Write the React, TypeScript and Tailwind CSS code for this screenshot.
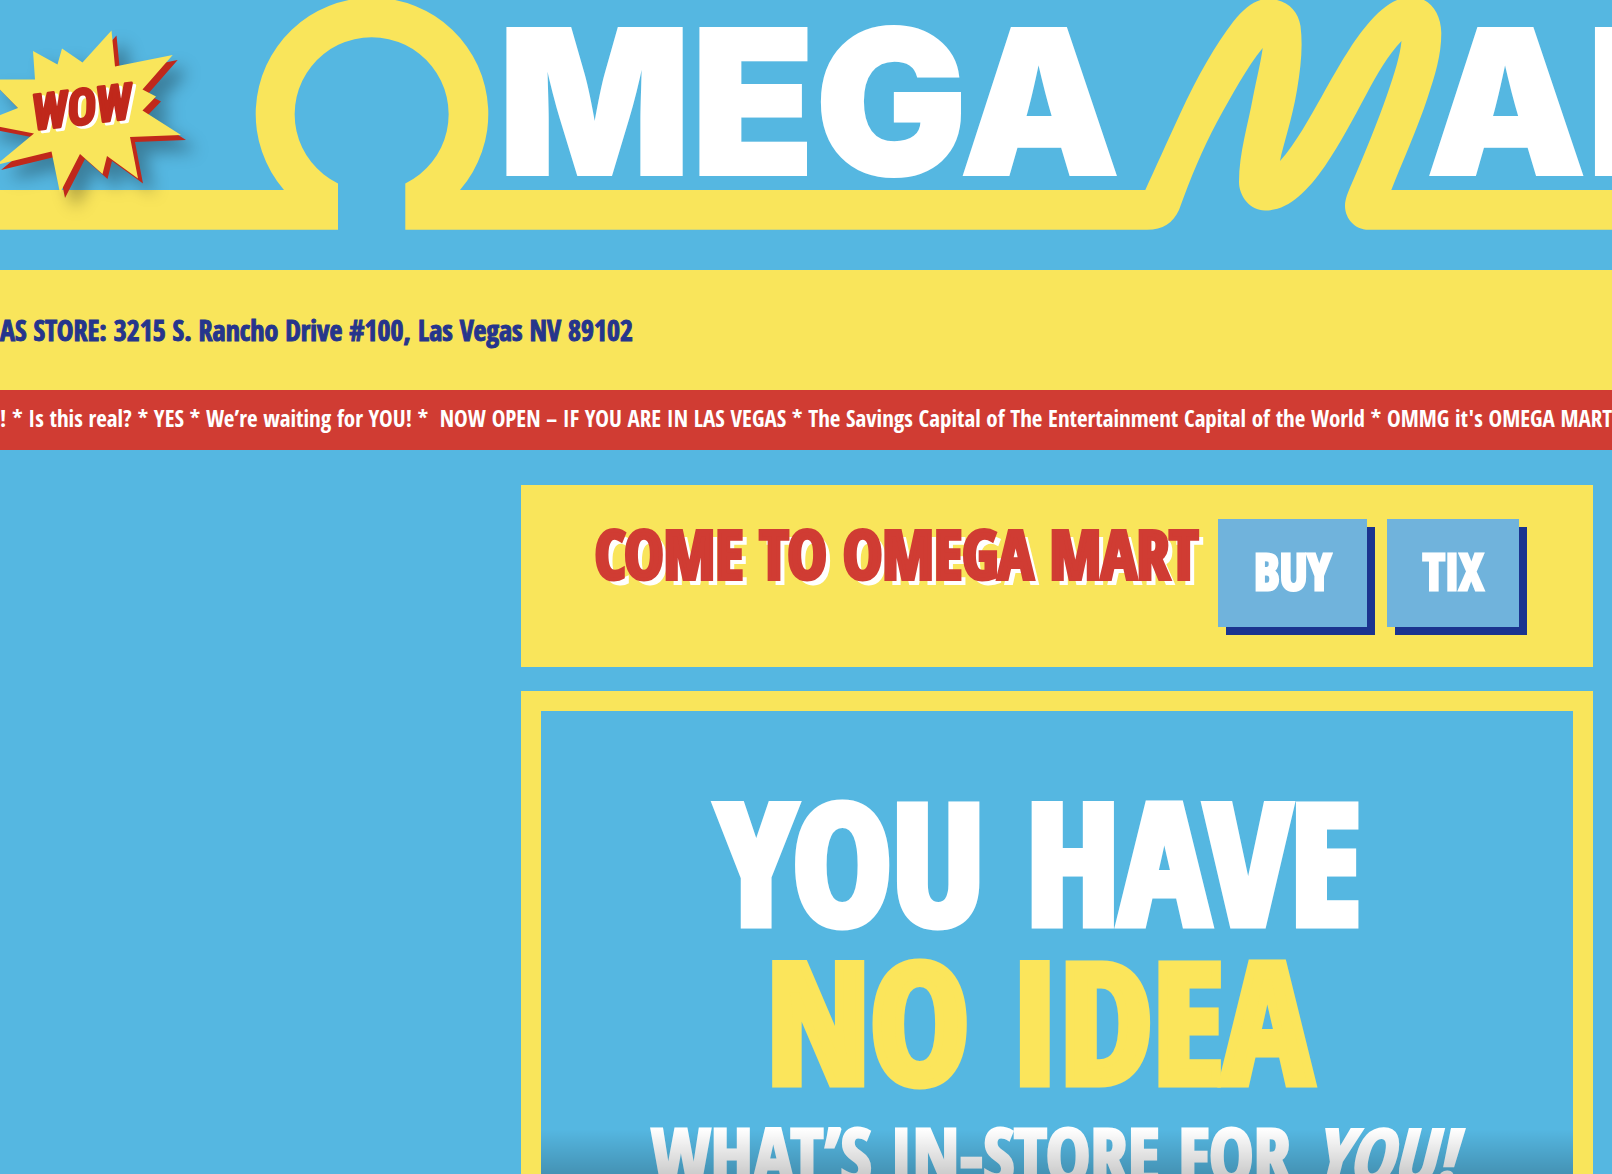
import type { ReactNode } from "react";

const BURST =
  "-10,79.5 35,79.5 33,51 57.5,64.5 62,48.5 82.5,62.5 111.5,30.5 115,66.5 172.7,55 142.5,89.5 156,96.5 142.5,110.5 181,135 130,137 138,178.5 107,156 102.5,174 80,154 60,193 51.5,151.5 -4,165 34,133.5 -20,123 18,108";

function Logo() {
  return (
    <svg viewBox="0 0 1612 230" className="block h-auto w-full" role="img" aria-label="Omega Mart">
      <g fill="#f9e55b">
        <path d="M0 190H284A116.3 116.3 0 1 1 460 190H1145.3C1155 169 1167 142 1180 114C1198 75 1216 44 1233 22C1246 6 1256 -1 1268 -1C1286 -1 1298 10 1300.5 26C1303 46 1301 66 1297 90C1292 120 1283 145 1280 161C1296 143 1310 117 1322 96C1341 62 1354 40 1367 25C1381 8 1396 -3 1411 -3C1429 -3 1441 12 1441.3 33C1441.3 56 1435 75 1427.5 98C1418 127 1402 163 1391.3 190H1612V229.7H1366C1352 228 1345 216 1345 206C1345 199 1348 192 1352 183C1365 153 1378 121 1387 95C1395 72 1400 56 1401.5 41C1388 55 1377 74 1366 95C1353 119 1340 144 1325 166C1306 193 1288 210.5 1265 210.5C1250 210.5 1239 196 1239 182C1239 153 1248 125 1253 97C1257 77 1261 61 1262.7 48C1247 67 1232 95 1217 122C1202 150 1191 177 1179 210C1173 223 1163 229.7 1147 229.7H405.3V183.5A77 77 0 1 0 338 183.5V229.7H0Z" />
      </g>
      <g fill="#ffffff" stroke="#ffffff" strokeWidth="2" className="font-['Inter',sans-serif] font-black">
        <text x="498" y="175" fontSize="202">MEGA</text>
        <text x="1426" y="175" fontSize="202">ART</text>
      </g>
      <g className="drop-shadow-[11px_11px_8px_rgba(0,0,0,0.3)]">
        <polygon points={BURST} transform="translate(5 5)" fill="#c0281b" />
        <polygon points={BURST} fill="#f9e55b" />
      </g>
      <g
        transform="translate(34 130) rotate(-7)"
        className="font-['Roboto_Condensed',sans-serif] font-semibold italic"
        strokeWidth="3"
        strokeLinejoin="round"
      >
        <text x="3" y="3" fontSize="49" fill="#ffffff" stroke="#ffffff">WOW</text>
        <text fontSize="49" fill="#c0281b" stroke="#c0281b">WOW</text>
      </g>
    </svg>
  );
}

function BuyLink({ children }: { children: ReactNode }) {
  return (
    <a
      href="#tickets"
      className="flex h-[108px] items-center justify-center bg-[#70b3dc] px-9 pb-1 text-[50px] font-black text-white shadow-[8px_8px_0_#1b348f] [-webkit-text-stroke:3px_#fff]"
    >
      {children}
    </a>
  );
}

export default function App() {
  return (
    <div className="h-screen overflow-hidden bg-[#55b7e1] font-['Open_Sans_Condensed','Roboto_Condensed',sans-serif]">
      <header className="pb-10">
        <Logo />
      </header>

      <div className="flex h-[120px] items-center overflow-hidden bg-[#f9e55b]">
        <p className="text-[28px] font-black whitespace-nowrap text-[#26358c] [-webkit-text-stroke:1px_#26358c]">
          AS STORE: 3215 S. Rancho Drive #100, Las Vegas NV 89102
        </p>
      </div>

      <div className="h-15 overflow-hidden bg-[#d03c33] leading-[56px]">
        <p className="text-[23px] whitespace-pre text-white">
          {"! * Is this real? * YES * We’re waiting for YOU! *  NOW OPEN – IF YOU ARE IN LAS VEGAS * The Savings Capital of The Entertainment Capital of the World * OMMG it's OMEGA MART"}
        </p>
      </div>

      <main className="mt-[35px] mr-[19px] ml-[521px] flex flex-col gap-6">
        <section className="flex h-[182px] items-start justify-center gap-5 bg-[#f9e55b] pt-[34px]">
          <h1 className="text-[66px] leading-[68px] font-black whitespace-nowrap text-[#d03c33] [-webkit-text-stroke:4px_#d03c33] [text-shadow:6px_6px_0_#fff]">
            COME TO OMEGA MART
          </h1>
          <BuyLink>BUY</BuyLink>
          <BuyLink>TIX</BuyLink>
        </section>

        <section className="relative h-[600px] border-20 border-[#f9e55b] text-center font-black">
          <h2 className="mr-9 pt-[70px] text-[166px] leading-[159px] whitespace-nowrap">
            <span className="block text-white [-webkit-text-stroke:9px_#fff]">YOU HAVE</span>
            <span className="block text-[#fbe55b] [-webkit-text-stroke:9px_#fbe55b]">NO IDEA</span>
          </h2>
          <p className="mr-2 text-[75px] leading-[110px] whitespace-nowrap text-white [-webkit-text-stroke:3px_#fff]">
            WHAT’S IN-STORE FOR <em className="ml-1">YOU!</em>
          </p>
          <div className="absolute inset-x-0 top-[418px] h-[45px] bg-linear-to-b from-black/0 to-black/20" />
        </section>
      </main>
    </div>
  );
}
